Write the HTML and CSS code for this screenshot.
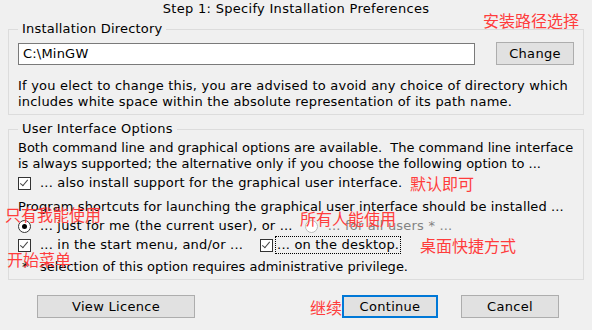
FILE: index.html
```html
<!DOCTYPE html>
<html lang="en">
<head>
    <meta charset="UTF-8">
    <title>Step 1: Specify Installation Preferences</title>
    <link rel="stylesheet" href="styles.css">
</head>
<body>
    <div class="title">Step 1: Specify Installation Preferences</div>

    <fieldset class="group group-dir">
        <legend>Installation Directory</legend>
        <div class="dir-row">
            <div class="entry">C:\MinGW</div>
            <button class="btn btn-change">Change</button>
        </div>
        <p class="note">If you elect to change this, you are advised to avoid any choice of directory which<br>
            includes white space within the absolute representation of its path name.</p>
    </fieldset>

    <fieldset class="group group-ui">
        <legend>User Interface Options</legend>
        <p class="note note-intro">Both command line and graphical options are available.&nbsp; The command line interface<br>
            is always supported; the alternative only if you choose the following option to ...</p>
        <div class="opt opt-gui">
            <span class="check"></span>
            <span class="opt-label">... also install support for the graphical user interface.</span>
        </div>
        <p class="note note-shortcuts">Program shortcuts for launching the graphical user interface should be installed ...</p>
        <div class="opt">
            <span class="radio on"></span>
            <span class="opt-label">... just for me (the current user), or ...</span>
            <span class="radio off"></span>
            <span class="opt-label disabled">... for all users * ...</span>
        </div>
        <div class="opt">
            <span class="check"></span>
            <span class="opt-label">... in the start menu, and/or ...</span>
            <span class="check check-desktop"></span>
            <span class="opt-label focus">... on the desktop.</span>
        </div>
        <div class="opt opt-star">
            <span class="star">*</span>
            <span class="opt-label">selection of this option requires administrative privilege.</span>
        </div>
    </fieldset>

    <div class="actions">
        <button class="btn btn-licence">View Licence</button>
        <button class="btn btn-continue">Continue</button>
        <button class="btn btn-cancel">Cancel</button>
    </div>

    <!-- 批注 -->
    <span class="note-cn cn-dir">安装路径选择</span>
    <span class="note-cn cn-gui">默认即可</span>
    <span class="note-cn cn-me">只有我能使用</span>
    <span class="note-cn cn-all">所有人能使用</span>
    <span class="note-cn cn-desk">桌面快捷方式</span>
    <span class="note-cn cn-start">开始菜单</span>
    <span class="note-cn cn-go">继续</span>
</body>
</html>
```

FILE: styles.css
```css
body {
    margin: 0;
    padding-top: 1px;
    background: #f0f0f0;
    color: #000;
    font-family: "DejaVu Sans", Verdana, sans-serif;
    font-size: 13px;
    letter-spacing: 0.2px;
    line-height: 16px;
    position: relative;
    width: 592px;
    height: 330px;
    overflow: hidden;
    white-space: nowrap;
}

.title {
    text-align: center;
    height: 16px;
    letter-spacing: 0.3px;
}

.group {
    margin: 4px 8px 0;
    padding: 5px 9px 4px;
    border: 1px solid #dcdcdc;
}

.group legend {
    padding: 0 4px;
    margin-left: 0;
    line-height: 16px;
}

.group-ui {
    margin-top: 6px;
    padding-top: 3px;
}

.dir-row {
    display: flex;
    align-items: center;
    justify-content: space-between;
}

.entry {
    width: 451px;
    height: 20px;
    line-height: 20px;
    padding-left: 4px;
    border: 1px solid #7a7a7a;
    background: #fff;
}

.btn {
    font-family: inherit;
    font-size: 13px;
    letter-spacing: 0.3px;
    line-height: 16px;
    color: #000;
    background: #e1e1e1;
    border: 1px solid #adadad;
    padding: 0;
    height: 23px;
}

.btn-change {
    width: 78px;
}

.note {
    margin: 0;
}

.group-dir .note {
    margin-top: 13px;
}

.note-intro {
    letter-spacing: 0;
}

.opt {
    display: flex;
    align-items: center;
    height: 16px;
    margin-top: 3px;
}

.opt-gui {
    margin-top: 3px;
}

.note-shortcuts {
    margin-top: 8px;
    letter-spacing: 0.1px;
}

.opt-star {
    margin-top: 6px;
    letter-spacing: 0;
}

.check,
.radio {
    width: 11px;
    height: 11px;
    border: 1px solid #333;
    background: #fff;
    position: relative;
    flex: none;
    margin-right: 9px;
}

.check::after {
    content: "";
    position: absolute;
    left: 3px;
    top: 0;
    width: 3px;
    height: 7px;
    border: solid #444;
    border-width: 0 1px 1px 0;
    transform: rotate(40deg);
}

.radio {
    border-radius: 50%;
}

.radio.on::after {
    content: "";
    position: absolute;
    left: 3px;
    top: 3px;
    width: 5px;
    height: 5px;
    border-radius: 50%;
    background: #000;
}

.radio.off {
    border-color: #bcbcbc;
    margin-left: 12px;
    margin-right: 10px;
}

.check-desktop {
    margin-left: 17px;
    margin-right: 3px;
}

.disabled {
    color: #838383;
}

.focus {
    outline: 1px dotted #000;
    padding: 0 1px;
}

.star {
    width: 13px;
    margin-left: 4px;
    margin-right: 5px;
}

.actions {
    display: flex;
    margin-top: 15px;
}

.btn-licence {
    width: 158px;
    margin-left: 37px;
}

.btn-continue {
    width: 96px;
    margin-left: 147px;
    border: 2px solid #0078d7;
}

.btn-cancel {
    width: 98px;
    margin-left: 23px;
}

.note-cn {
    position: absolute;
    font-family: "Noto Sans CJK SC", sans-serif;
    font-size: 16px;
    letter-spacing: 0;
    line-height: 18px;
    color: #ff3c3c;
}

.cn-dir { left: 483px; top: 11px; }
.cn-gui { left: 410px; top: 174px; }
.cn-me { left: 5px; top: 205px; }
.cn-all { left: 300px; top: 209px; }
.cn-desk { left: 420px; top: 236px; }
.cn-start { left: 7px; top: 250px; }
.cn-go { left: 310px; top: 298px; }
```
